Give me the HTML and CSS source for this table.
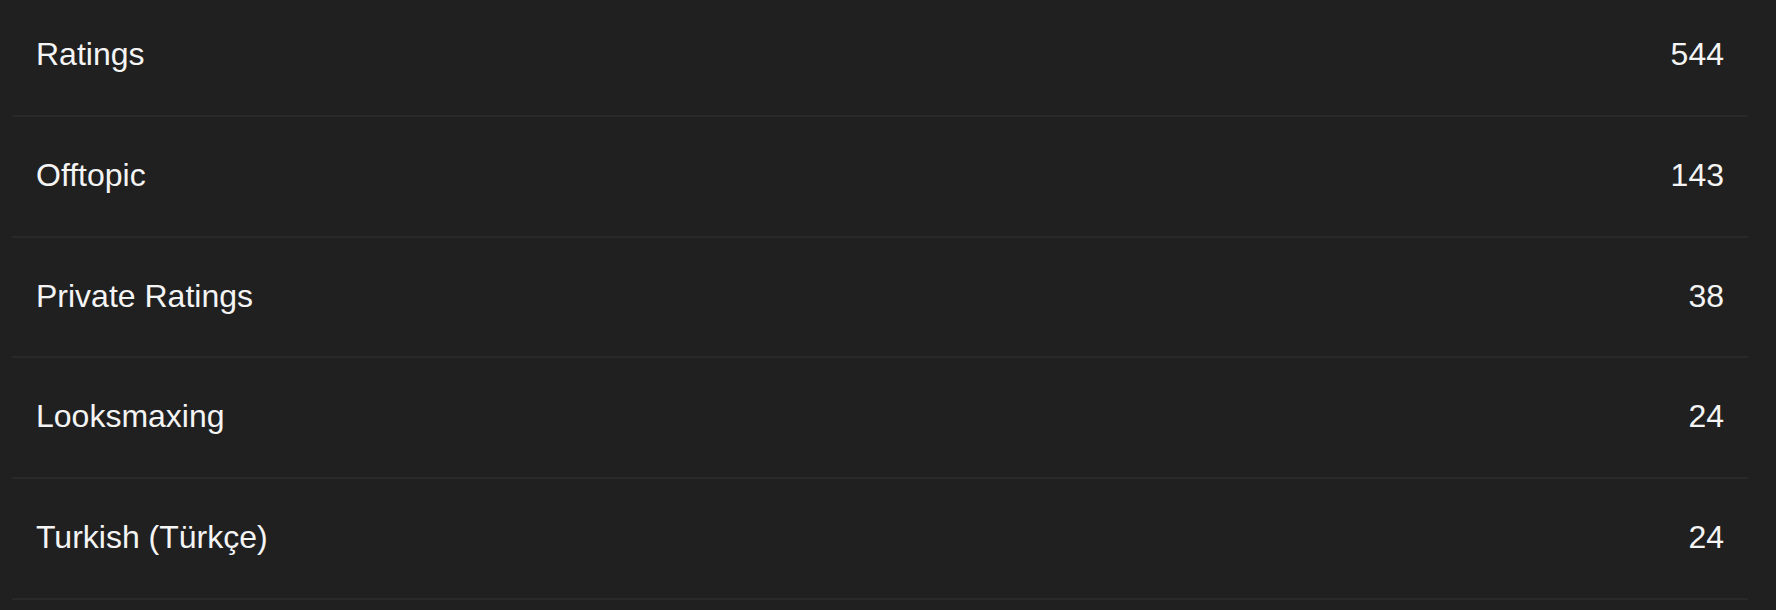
FILE: index.html
```html
<!DOCTYPE html>
<html lang="en">
<head>
<meta charset="utf-8">
<title>Forums</title>
<link rel="stylesheet" href="styles.css">
</head>
<body>
<div class="page">
  <ul class="forum-list">
    <li class="forum-row"><span class="forum-name">Ratings</span><span class="forum-count">544</span></li>
    <li class="forum-row"><span class="forum-name">Offtopic</span><span class="forum-count">143</span></li>
    <li class="forum-row"><span class="forum-name">Private Ratings</span><span class="forum-count">38</span></li>
    <li class="forum-row"><span class="forum-name">Looksmaxing</span><span class="forum-count">24</span></li>
    <li class="forum-row"><span class="forum-name">Turkish (Türkçe)</span><span class="forum-count">24</span></li>
  </ul>
</div>
</body>
</html>
```

FILE: styles.css
```css
html, body {
  margin: 0;
  padding: 0;
  background: #202020;
  height: 100%;
  overflow: hidden;
}

body {
  font-family: "Liberation Sans", Arial, Helvetica, sans-serif;
  color: #f4f4f4;
}

.page {
  padding: 0 28px 0 12px;
  margin-top: -4px;
}

.forum-list {
  list-style: none;
  margin: 0;
  padding: 0;
  background: #242424;
}

.forum-row {
  display: flex;
  justify-content: space-between;
  align-items: center;
  height: 120.75px;
  box-sizing: border-box;
  padding: 40px 24px 42.75px 24px;
  font-size: 32px;
  line-height: 36px;
  background: #202020;
  border-bottom: 2px solid #292929;
}

.forum-count {
  text-align: right;
}
```
